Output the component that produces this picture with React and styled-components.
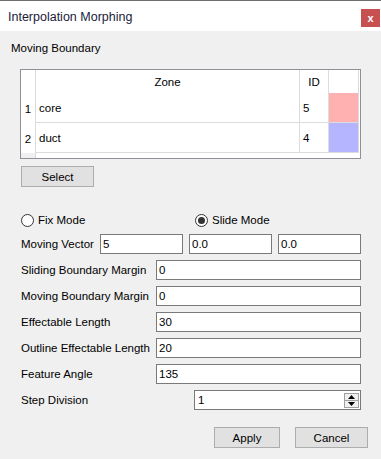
import React from 'react';
import styled, { createGlobalStyle } from 'styled-components';

const GlobalStyle = createGlobalStyle`
  html, body {
    margin: 0;
    padding: 0;
    background: #f0f0f0;
  }
  * {
    box-sizing: border-box;
  }
`;

const Window = styled.div`
  width: 381px;
  height: 459px;
  display: flex;
  flex-direction: column;
  font-family: "Liberation Sans", Arial, sans-serif;
  font-size: 11.5px;
  color: #000;
  overflow: hidden;
`;

const TitleBar = styled.div`
  height: 31px;
  border-top: 1px solid #6e6e6e;
  background: #fff;
  display: flex;
  justify-content: space-between;
  padding-left: 8px;
`;

const Title = styled.div`
  font-size: 12.5px;
  color: #1b1b3a;
  line-height: 14px;
  margin-top: 9px;
`;

const CloseButton = styled.div`
  width: 19px;
  height: 18px;
  margin-top: 8px;
  margin-right: 1px;
  background: #c75050;
  color: #fff;
  font-weight: bold;
  font-size: 11px;
  display: flex;
  align-items: center;
  justify-content: center;
  line-height: 1;
`;

const Body = styled.div`
  flex: 1;
  background: #f0f0f0;
  padding: 10px 20px 0 11px;
  display: flex;
  flex-direction: column;
`;

const Heading = styled.div`
  line-height: 14px;
`;

const Group = styled.div`
  padding-left: 9px;
  display: flex;
  flex-direction: column;
`;

const Table = styled.div`
  margin-top: 14px;
  border: 1px solid #8e9298;
  background: #fff;
  display: grid;
  grid-template-columns: 15px 264px 29px 30px 1fr;
  grid-template-rows: 23px 30px 30px 5px;
`;

const HeadCell = styled.div`
  border-right: 1px solid #dcdcdc;
  display: flex;
  align-items: center;
  justify-content: center;
  padding-top: 1px;
`;

const NumCell = styled.div`
  border-right: 1px solid #dcdcdc;
  display: flex;
  align-items: center;
  justify-content: center;
  padding-top: 1px;
`;

const Cell = styled.div`
  border-right: 1px solid #dcdcdc;
  border-bottom: 1px solid #dcdcdc;
  display: flex;
  align-items: center;
  padding-left: 3px;
  padding-top: 1px;
  background: ${p => p.$color || '#fff'};
`;

const Corner = styled.div`
  background: #f0f0f0;
  border-right: 1px solid #dcdcdc;
`;

const Filler = styled.div`
  background: #fff;
`;

const Button = styled.button`
  width: ${p => p.$w}px;
  height: 21px;
  background: #e1e1e1;
  border: 1px solid #adadad;
  font-family: inherit;
  font-size: 11.5px;
  color: #000;
  padding: 0;
`;

const SelectRow = styled.div`
  margin-top: 7px;
  padding-left: 1px;
`;

const RadioRow = styled.div`
  margin-top: 26px;
  display: grid;
  grid-template-columns: 174px 1fr;
  height: 14px;
`;

const RadioLabel = styled.label`
  display: flex;
  align-items: center;
  gap: 4px;
  line-height: 14px;
`;

const RadioCircle = styled.span`
  width: 13px;
  height: 13px;
  border-radius: 50%;
  border: 1px solid #333;
  background: #fff;
  display: flex;
  align-items: center;
  justify-content: center;
  margin-left: 1px;
  &::after {
    content: '';
    display: ${p => (p.$checked ? 'block' : 'none')};
    width: 7px;
    height: 7px;
    border-radius: 50%;
    background: #333;
  }
`;

const Form = styled.div`
  margin-top: 7px;
  display: flex;
  flex-direction: column;
  gap: 6px;
`;

const VectorRow = styled.div`
  display: grid;
  grid-template-columns: 74px 83px 83px 83px;
  column-gap: 6px;
  align-items: center;
`;

const FieldRow = styled.div`
  display: grid;
  grid-template-columns: ${p => p.$label}px 1fr;
  align-items: center;
`;

const Label = styled.div`
  padding-left: 1px;
  white-space: nowrap;
`;

const Input = styled.div`
  height: 20px;
  background: #fff;
  border: 1px solid #7a7a7a;
  padding-left: 2px;
  display: flex;
  align-items: center;
`;

const SpinBox = styled.div`
  height: 20px;
  background: #fff;
  border: 1px solid #7a7a7a;
  padding-left: 3px;
  display: flex;
  align-items: center;
  justify-content: space-between;
`;

const SpinButtons = styled.div`
  width: 15px;
  height: 15px;
  margin-right: 1px;
  display: flex;
  flex-direction: column;
  border: 1px solid #a0a0a0;
  background: #f0f0f0;
`;

const SpinHalf = styled.div`
  flex: 1;
  display: flex;
  align-items: center;
  justify-content: center;
  border-top: ${p => (p.$down ? '1px solid #a0a0a0' : 'none')};
`;

const ButtonRow = styled.div`
  margin-top: 17px;
  margin-right: -7px;
  display: flex;
  justify-content: flex-end;
  gap: 15px;
`;

const Arrow = ({ down }) => (
  <svg width="7" height="4" viewBox="0 0 7 4">
    {down ? <polygon points="0,0 7,0 3.5,4" fill="#000" /> : <polygon points="0,4 7,4 3.5,0" fill="#000" />}
  </svg>
);

const zones = [
  { n: 1, name: 'core', id: 5, color: '#ffb0b0' },
  { n: 2, name: 'duct', id: 4, color: '#b4b4ff' },
];

const fields = [
  { label: 'Sliding Boundary Margin', value: '0' },
  { label: 'Moving Boundary Margin', value: '0' },
  { label: 'Effectable Length', value: '30' },
  { label: 'Outline Effectable Length', value: '20' },
  { label: 'Feature Angle', value: '135' },
];

export default function App() {
  return (
    <Window>
      <GlobalStyle />
      <TitleBar>
        <Title>Interpolation Morphing</Title>
        <CloseButton>x</CloseButton>
      </TitleBar>
      <Body>
        <Heading>Moving Boundary</Heading>
        <Group>
          <Table>
            <HeadCell />
            <HeadCell>Zone</HeadCell>
            <HeadCell>ID</HeadCell>
            <HeadCell />
            <Filler />
            {zones.map(z => (
              <React.Fragment key={z.n}>
                <NumCell>{z.n}</NumCell>
                <Cell>{z.name}</Cell>
                <Cell>{z.id}</Cell>
                <Cell $color={z.color} />
                <Filler />
              </React.Fragment>
            ))}
            <Corner />
            <Filler />
            <Filler />
            <Filler />
            <Filler />
          </Table>
          <SelectRow>
            <Button $w={73}>Select</Button>
          </SelectRow>
          <RadioRow>
            <RadioLabel>
              <RadioCircle />
              Fix Mode
            </RadioLabel>
            <RadioLabel>
              <RadioCircle $checked />
              Slide Mode
            </RadioLabel>
          </RadioRow>
          <Form>
            <VectorRow>
              <Label>Moving Vector</Label>
              <Input>5</Input>
              <Input>0.0</Input>
              <Input>0.0</Input>
            </VectorRow>
            {fields.map(f => (
              <FieldRow key={f.label} $label={136}>
                <Label>{f.label}</Label>
                <Input>{f.value}</Input>
              </FieldRow>
            ))}
            <FieldRow $label={174}>
              <Label>Step Division</Label>
              <SpinBox>
                1
                <SpinButtons>
                  <SpinHalf><Arrow /></SpinHalf>
                  <SpinHalf $down><Arrow down /></SpinHalf>
                </SpinButtons>
              </SpinBox>
            </FieldRow>
          </Form>
          <ButtonRow>
            <Button $w={66}>Apply</Button>
            <Button $w={73}>Cancel</Button>
          </ButtonRow>
        </Group>
      </Body>
    </Window>
  );
}
